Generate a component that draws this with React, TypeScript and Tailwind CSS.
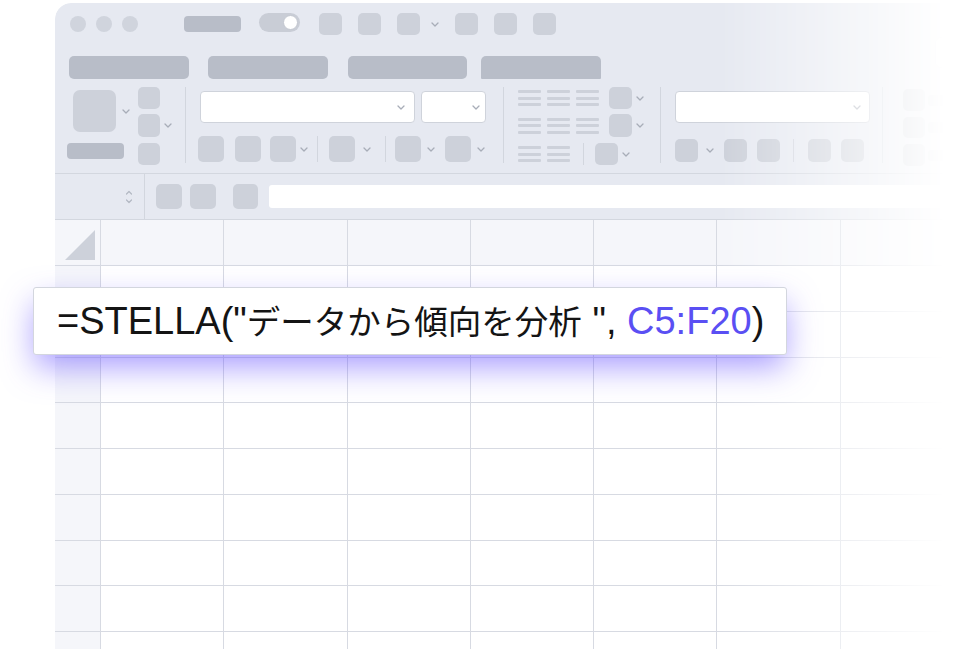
import React from "react";

const Sq = ({ className = "" }: { className?: string }) => (
  <div className={`shrink-0 rounded-[5px] bg-[#cdd1da] ${className}`} />
);

const Chev = ({ className = "" }: { className?: string }) => (
  <svg width="8" height="5" viewBox="0 0 8 5" className={`shrink-0 ${className}`}>
    <path d="M1 1l3 3 3-3" fill="none" stroke="#a8adb8" strokeWidth="1.3" strokeLinecap="round" strokeLinejoin="round" />
  </svg>
);

const Sep = ({ className = "" }: { className?: string }) => (
  <div className={`w-px shrink-0 bg-[#d2d6de] ${className}`} />
);

const Select = ({ className = "" }: { className?: string }) => (
  <div className={`flex shrink-0 items-center justify-end rounded-[4px] border border-[#cfd3db] bg-white ${className}`}>
    <Chev />
  </div>
);

// three-line alignment glyph
const Align = ({ className = "" }: { className?: string }) => (
  <div className={`flex w-[23px] shrink-0 flex-col gap-[3.5px] ${className}`}>
    <div className="h-[3px] rounded-[1px] bg-[#cdd1da]" />
    <div className="h-[3px] rounded-[1px] bg-[#cdd1da]" />
    <div className="h-[3px] rounded-[1px] bg-[#cdd1da]" />
  </div>
);

function Header() {
  return (
    <div className="flex">
      <div className="w-[880px] shrink-0">
        <div className="flex h-[42px] items-center pl-[15px]">
          <div className="h-4 w-4 rounded-full bg-[#d0d4dd]" />
          <div className="ml-[10px] h-4 w-4 rounded-full bg-[#d0d4dd]" />
          <div className="ml-[10px] h-4 w-4 rounded-full bg-[#d0d4dd]" />
          <div className="ml-[46px] h-[16px] w-[57px] rounded-[4px] bg-[#b8bdc8]" />
          <div className="mb-[3px] ml-[18px] flex h-[19px] w-[41px] items-center justify-end rounded-full bg-[#c9cdd6] pr-[2px]">
            <div className="h-[15px] w-[15px] rounded-full border border-[#c3c7d0] bg-white" />
          </div>
          <Sq className="ml-[19px] h-[22px] w-[23px]" />
          <Sq className="ml-[16px] h-[22px] w-[23px]" />
          <Sq className="ml-[16px] h-[22px] w-[23px]" />
          <Chev className="ml-[11px]" />
          <Sq className="ml-[16px] h-[22px] w-[23px]" />
          <Sq className="ml-[16px] h-[22px] w-[23px]" />
          <Sq className="ml-[16px] h-[22px] w-[23px]" />
        </div>
        <div className="mt-[11px] flex h-[23px] pl-[14px]">
          <div className="w-[120px] rounded-[5px] bg-[#b8bdc8]" />
          <div className="ml-[19px] w-[120px] rounded-[5px] bg-[#b8bdc8]" />
          <div className="ml-[20px] w-[119px] rounded-[5px] bg-[#b8bdc8]" />
          <div className="ml-[14px] w-[120px] rounded-t-[5px] rounded-b-[1px] bg-[#b8bdc8]" />
        </div>
      </div>
      <div className="mt-[34px] h-[31px] w-[60px] shrink-0 rounded-[6px] border border-[#d6d9e1] bg-white" />
    </div>
  );
}

function Ribbon() {
  return (
    <div className="flex h-[95px] shrink-0 items-start border-b border-[#d3d7df] pt-[8px]">
      {/* clipboard */}
      <div className="ml-[12px] flex">
        <div className="flex flex-col">
          <div className="mt-[3px] flex items-center">
            <Sq className="ml-[6px] h-[42px] w-[43px] rounded-[7px]" />
            <Chev className="ml-[6px]" />
          </div>
          <div className="mt-[11px] h-[16px] w-[57px] rounded-[4px] bg-[#b8bdc8]" />
        </div>
        <div className="ml-[8px] flex flex-col">
          <Sq className="h-[22px] w-[22px]" />
          <div className="mt-[5px] flex items-center">
            <Sq className="h-[23px] w-[22px]" />
            <Chev className="ml-[4px]" />
          </div>
          <Sq className="mt-[6px] h-[22px] w-[22px]" />
        </div>
      </div>
      <Sep className="ml-[13px] h-[76px]" />

      {/* font */}
      <div className="ml-[12px] flex flex-col">
        <div className="mt-[4px] flex">
          <Select className="ml-[2px] h-[32px] w-[215px] pr-[9px]" />
          <Select className="ml-[6px] h-[32px] w-[65px] pr-[5px]" />
        </div>
        <div className="mt-[13px] flex h-[26px] items-center">
          <Sq className="h-[26px] w-[26px]" />
          <Sq className="ml-[11px] h-[26px] w-[26px]" />
          <Sq className="ml-[9px] h-[26px] w-[26px]" />
          <Chev className="ml-[4px]" />
          <Sep className="ml-[9px] h-[26px]" />
          <Sq className="ml-[11px] h-[26px] w-[26px]" />
          <Chev className="ml-[8px]" />
          <Sep className="ml-[14px] h-[26px]" />
          <Sq className="ml-[9px] h-[26px] w-[26px]" />
          <Chev className="ml-[6px]" />
          <Sq className="ml-[10px] h-[26px] w-[26px]" />
          <Chev className="ml-[6px]" />
        </div>
      </div>
      <Sep className="ml-[17px] h-[76px]" />

      {/* alignment */}
      <div className="ml-[14px] flex flex-col">
        <div className="flex h-[22px] items-center">
          <Align />
          <Align className="ml-[6px]" />
          <Align className="ml-[6px]" />
          <Sq className="ml-[10px] h-[22px] w-[23px]" />
          <Chev className="ml-[4px]" />
        </div>
        <div className="mt-[5px] flex h-[23px] items-center">
          <Align />
          <Align className="ml-[6px]" />
          <Align className="ml-[6px]" />
          <Sq className="ml-[10px] h-[23px] w-[23px]" />
          <Chev className="ml-[4px]" />
        </div>
        <div className="mt-[6px] flex h-[22px] items-center">
          <Align />
          <Align className="ml-[6px]" />
          <Sep className="ml-[13px] h-[22px]" />
          <Sq className="ml-[11px] h-[22px] w-[23px]" />
          <Chev className="ml-[4px]" />
        </div>
      </div>
      <Sep className="ml-[16px] h-[76px]" />

      {/* number */}
      <div className="ml-[14px] flex flex-col">
        <Select className="mt-[4px] h-[32px] w-[195px] pr-[8px]" />
        <div className="mt-[16px] flex h-[23px] items-center">
          <Sq className="h-[23px] w-[23px]" />
          <Chev className="ml-[8px]" />
          <Sq className="ml-[10px] h-[23px] w-[23px]" />
          <Sq className="ml-[10px] h-[23px] w-[23px]" />
          <Sep className="ml-[13px] h-[23px]" />
          <Sq className="ml-[14px] h-[23px] w-[23px]" />
          <Sq className="ml-[10px] h-[23px] w-[23px]" />
        </div>
      </div>
      <Sep className="ml-[12px] h-[76px]" />

      {/* styles */}
      <div className="ml-[20px] mt-[2px] flex flex-col">
        <div className="flex items-center">
          <Sq className="h-[22px] w-[22px]" />
          <div className="ml-[3px] h-[11px] w-[40px] rounded-[3px] bg-[#cdd1da]" />
        </div>
        <div className="mt-[6px] flex items-center">
          <Sq className="h-[21px] w-[22px]" />
          <div className="ml-[3px] h-[11px] w-[40px] rounded-[3px] bg-[#cdd1da]" />
        </div>
        <div className="mt-[6px] flex items-center">
          <Sq className="h-[22px] w-[22px]" />
          <div className="ml-[3px] h-[11px] w-[40px] rounded-[3px] bg-[#cdd1da]" />
        </div>
      </div>
    </div>
  );
}

function FormulaBar() {
  return (
    <div className="flex h-[46px] shrink-0 items-center border-b border-[#d3d7df]">
      <svg width="8" height="16" viewBox="0 0 8 16" className="ml-[70px] shrink-0">
        <path d="M1.5 5l2.5-2.5L6.5 5" fill="none" stroke="#b3b8c3" strokeWidth="1.2" strokeLinecap="round" strokeLinejoin="round" />
        <path d="M1.5 11l2.5 2.5L6.5 11" fill="none" stroke="#b3b8c3" strokeWidth="1.2" strokeLinecap="round" strokeLinejoin="round" />
      </svg>
      <Sep className="ml-[11px] self-stretch" />
      <Sq className="ml-[11px] h-[25px] w-[26px]" />
      <Sq className="ml-[8px] h-[25px] w-[26px]" />
      <Sq className="ml-[17px] h-[25px] w-[25px]" />
      <div className="ml-[11px] h-[23px] flex-1 rounded-l-[3px] bg-white" />
    </div>
  );
}

const COLS = [0, 1, 2, 3, 4, 5, 6];
const ROWS = [0, 1, 2, 3, 4, 5, 6, 7, 8];

function Grid() {
  return (
    <div className="flex flex-1 flex-col bg-white">
      <div className="flex h-[46px] shrink-0 bg-[#f5f6fa]">
        <div className="flex w-[46px] shrink-0 items-end justify-end border-r border-b border-[#d7dae2] p-[5px]">
          <svg width="30" height="30" viewBox="0 0 30 30">
            <path d="M30 0V30H0Z" fill="#cdd1da" />
          </svg>
        </div>
        {COLS.map((c) => (
          <div key={c} className="w-[123.3px] shrink-0 border-r border-b border-[#d7dae2]" />
        ))}
      </div>
      {ROWS.map((r) => (
        <div key={r} className="flex h-[45.75px] shrink-0">
          <div className="w-[46px] shrink-0 border-r border-b border-[#d7dae2] bg-[#f5f6fa]" />
          {COLS.map((c) => (
            <div key={c} className="w-[123.3px] shrink-0 border-r border-b border-[#d7dae2]" />
          ))}
        </div>
      ))}
    </div>
  );
}

function FormulaPopup() {
  return (
    <div className="absolute left-[33px] top-[287px] flex h-[68px] w-[754px] items-center rounded-[3px] border border-[#d3d6de] bg-white pl-[23px] shadow-[0_14px_32px_-2px_rgba(98,76,255,0.55)]">
      <span className="whitespace-nowrap text-[38px] leading-none text-[#141414] [font-family:'Liberation_Sans','Noto_Sans_CJK_JP',sans-serif]">
        =STELLA("<span className="text-[33.5px]">データから傾向を分析</span> ", <span className="text-[#5a4ff3]">C5:F20</span>)
      </span>
    </div>
  );
}

export default function App() {
  return (
    <div className="relative h-[649px] w-[960px] overflow-hidden bg-white">
      <div className="ml-[55px] mt-[3px] flex h-[646px] w-[905px] flex-col overflow-hidden rounded-tl-[16px] bg-[#e6e9f1] [mask-image:linear-gradient(to_right,black_665px,transparent_890px)]">
        <Header />
        <Ribbon />
        <FormulaBar />
        <Grid />
      </div>
      <FormulaPopup />
    </div>
  );
}
